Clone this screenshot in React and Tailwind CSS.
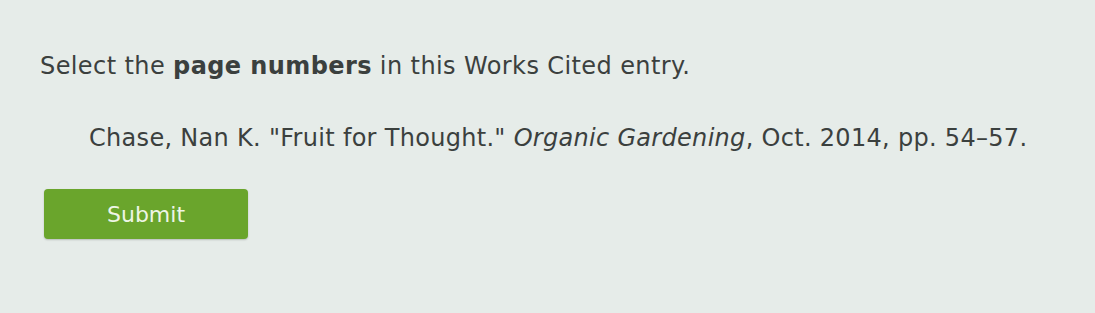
export default function App() {
  return (
    <div
      className="w-[1095px] h-[313px] bg-[#e6ece9] text-[#3b403e] overflow-hidden"
      style={{ fontFamily: '"DejaVu Sans", Verdana, sans-serif' }}
    >
      <div className="pt-[50px] pl-[40px]">
        <p className="text-[24px] leading-[32px] tracking-[0.4px]">
          Select the <b className="font-bold">page numbers</b> in this Works Cited entry.
        </p>
        <p className="mt-[40px] pl-[49px] text-[24px] leading-[32px] tracking-[0.3px]">
          Chase, Nan K. "Fruit for Thought." <i>Organic Gardening</i>, Oct. 2014, pp. 54–57.
        </p>
        <button className="mt-[35px] ml-[4px] w-[204px] h-[50px] rounded-[4px] bg-[#6aa52c] text-[#eef5e6] text-[22px] shadow-[0_1px_2px_rgba(0,0,0,0.2)]">
          Submit
        </button>
      </div>
    </div>
  );
}
